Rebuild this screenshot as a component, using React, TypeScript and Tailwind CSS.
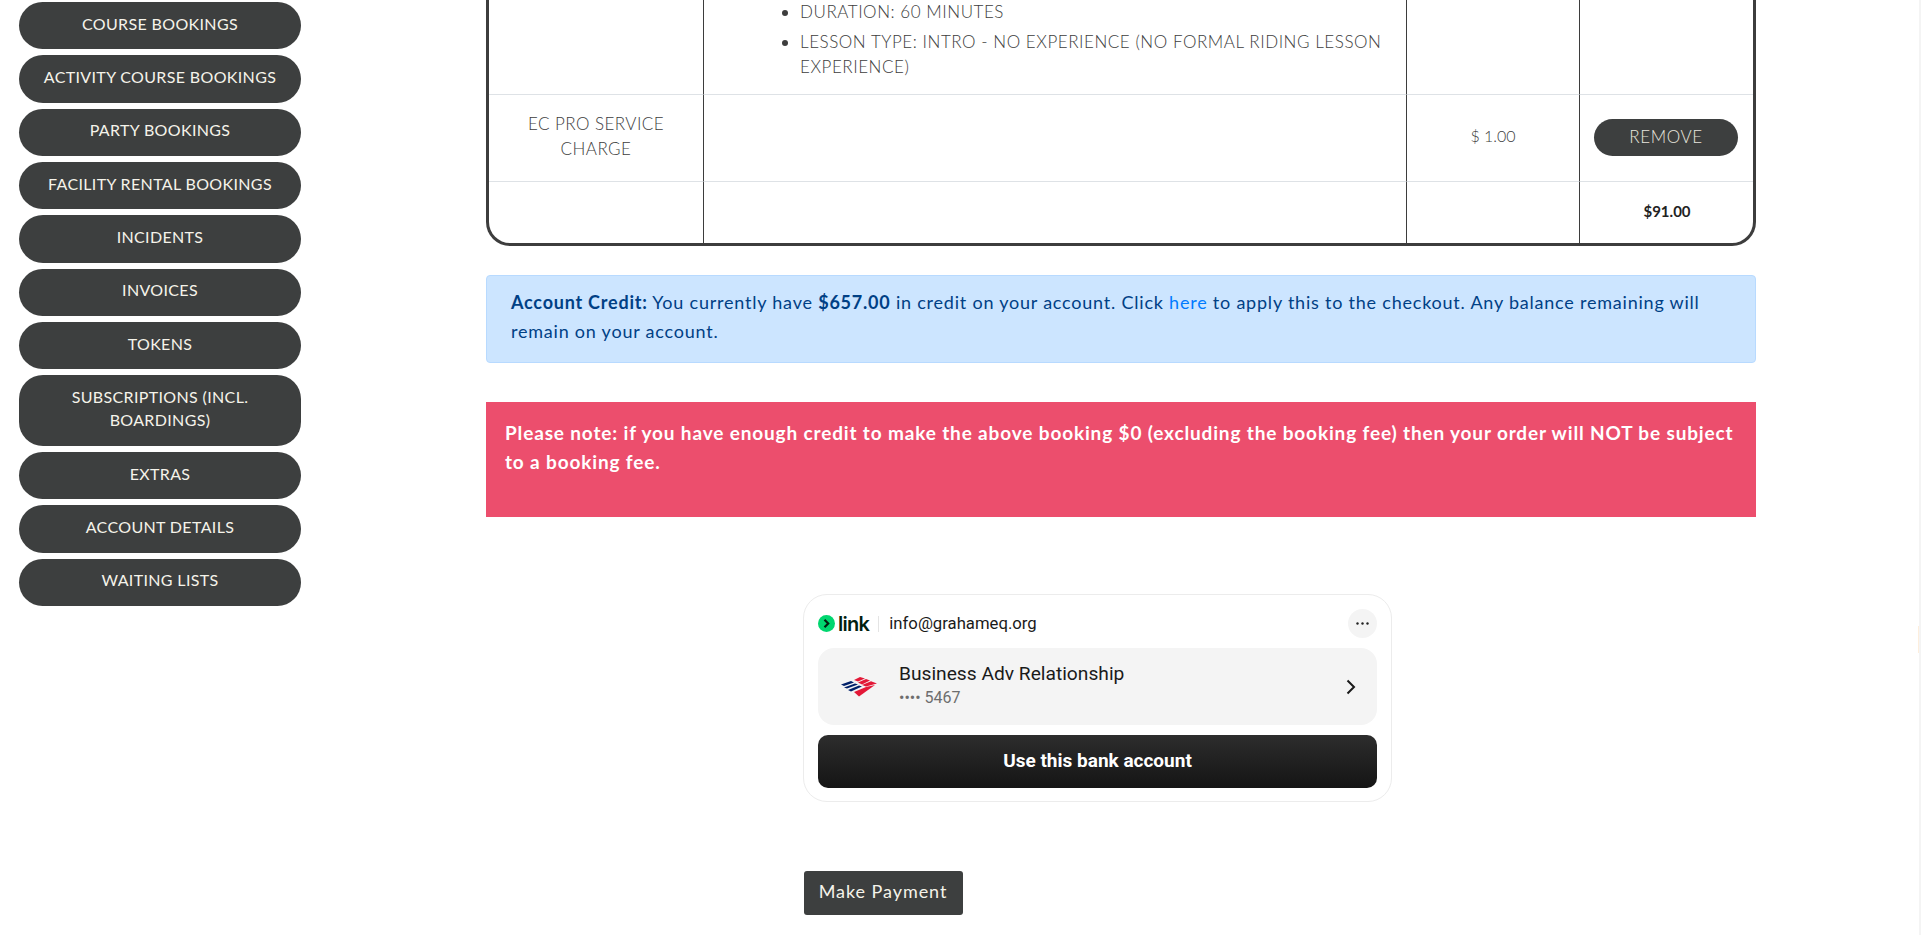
const navItems = [
  "COURSE BOOKINGS",
  "ACTIVITY COURSE BOOKINGS",
  "PARTY BOOKINGS",
  "FACILITY RENTAL BOOKINGS",
  "INCIDENTS",
  "INVOICES",
  "TOKENS",
  "SUBSCRIPTIONS (INCL. BOARDINGS)",
  "EXTRAS",
  "ACCOUNT DETAILS",
  "WAITING LISTS",
];

function Sidebar() {
  return (
    <nav className="ml-[19px] flex w-[282px] shrink-0 flex-col gap-[6px] pt-[2px]">
      {navItems.map((item) => (
        <a
          key={item}
          className="flex min-h-[47.35px] items-center justify-center rounded-[24px] bg-[#3d3f3f] px-[16px] pb-[14.5px] pt-[9.5px] text-center text-[16px] leading-[23.35px] tracking-[0.35px] text-[#f5f3ea]"
        >
          <span className={item.startsWith("SUBSCRIPTIONS") ? "max-w-[190px]" : ""}>{item}</span>
        </a>
      ))}
    </nav>
  );
}

function OrderTable() {
  return (
    <div className="grid grid-cols-[215px_703px_173px_174px] grid-rows-[94px_87px_62px] overflow-hidden rounded-b-[24px] border-x-[3px] border-b-[3px] border-[#3d3d3d] text-[17px] font-light text-[#3d3d3d]">
      <div className="border-r border-[#3d3d3d]" />
      <div className="border-r border-[#3d3d3d] pl-[96px] pr-[20px] tracking-[0.55px]">
        <ul className="list-disc leading-[24.5px]">
          <li className="h-[30px]">DURATION: 60 MINUTES</li>
          <li>LESSON TYPE: INTRO - NO EXPERIENCE (NO FORMAL RIDING LESSON EXPERIENCE)</li>
        </ul>
      </div>
      <div className="border-r border-[#3d3d3d]" />
      <div />

      <div className="flex items-center justify-center border-r border-t border-[#3d3d3d] border-t-[#dee2e6] px-[30px] pb-[3px] text-center leading-[24.5px] tracking-[0.45px]">
        EC PRO SERVICE CHARGE
      </div>
      <div className="border-r border-t border-[#3d3d3d] border-t-[#dee2e6]" />
      <div className="flex items-center justify-center border-r border-t border-[#3d3d3d] border-t-[#dee2e6] pb-[5px] text-[16px]">$ 1.00</div>
      <div className="flex items-center justify-center border-t border-[#dee2e6] pb-[2px] pr-[2px]">
        <button className="h-[37px] w-[144px] rounded-[19px] bg-[#3d3f3f] text-[17px] font-light tracking-[0.6px] text-[#e8e6de]">
          REMOVE
        </button>
      </div>

      <div className="border-r border-t border-[#3d3d3d] border-t-[#dee2e6]" />
      <div className="border-r border-t border-[#3d3d3d] border-t-[#dee2e6]" />
      <div className="border-r border-t border-[#3d3d3d] border-t-[#dee2e6]" />
      <div className="flex items-center justify-center border-t border-[#dee2e6] pb-[3px] text-[15px] font-bold text-[#222]">
        $91.00
      </div>
    </div>
  );
}

function LinkLogo() {
  return (
    <div className="flex items-center gap-[3px] font-[Inter,sans-serif]">
      <svg width="17" height="17" viewBox="0 0 17 17">
        <circle cx="8.5" cy="8.5" r="8.5" fill="#00d66f" />
        <path d="M6.5 4.8 L10.2 8.5 L6.5 12.2" fill="none" stroke="#011e0f" strokeWidth="2.2" />
      </svg>
      <span className="text-[20px] leading-none font-semibold tracking-[-0.7px] text-[#011e0f]">link</span>
    </div>
  );
}

function BankLogo() {
  return (
    <svg width="36" height="20" viewBox="0 0 36 20">
      <path d="M0 7.5 L10 4 L13 5.5 L3 9 Z" fill="#012169" />
      <path d="M3 10.5 L14 6.5 L17 7.5 L6 11.5 Z" fill="#012169" />
      <path d="M7 13 L18 8.5 L21 9.5 L10 14.5 Z" fill="#012169" />
      <path d="M13 3 L19 0 L24 1.5 L17 4.5 Z" fill="#e31837" />
      <path d="M17 5.5 L25 2 L29 3.5 L21 7.5 Z" fill="#e31837" />
      <path d="M21 8 L30 4.2 L36 6.5 L25 9.5 Z" fill="#e31837" />
      <path d="M13 15 L25 10 L34 8 L18 19.5 Z" fill="#e31837" />
    </svg>
  );
}

function LinkCard() {
  return (
    <div className="ml-[317px] mt-[77px] flex h-[208px] w-[589px] flex-col rounded-[24px] border border-[#ececec] px-[14px] pt-[14px] font-[Roboto,sans-serif]">
      <div className="flex h-[29px] items-center">
        <LinkLogo />
        <div className="ml-[9px] h-[16px] w-px bg-[#e4e4e4]" />
        <span className="ml-[10px] text-[16.7px] text-[#1a1a1a]">info@grahameq.org</span>
        <div className="ml-auto flex h-[29px] w-[29px] items-center justify-center rounded-full bg-[#f4f4f4]">
          <svg width="13" height="3" viewBox="0 0 13 3" fill="#222">
            <circle cx="1.5" cy="1.5" r="1.2" />
            <circle cx="6.5" cy="1.5" r="1.2" />
            <circle cx="11.5" cy="1.5" r="1.2" />
          </svg>
        </div>
      </div>
      <div className="mt-[10px] flex h-[77px] items-center rounded-[16px] bg-[#f4f4f4] pl-[23px] pr-[21px]">
        <BankLogo />
        <div className="ml-[22px] pb-[2px]">
          <div className="text-[19.2px] leading-[24px] text-[#1a1a1a]">Business Adv Relationship</div>
          <div className="mt-[1px] text-[16px] leading-[22px] text-[#6d6d6d]">•••• 5467</div>
        </div>
        <svg className="ml-auto" width="10" height="16" viewBox="0 0 10 16" fill="none" stroke="#1a1a1a" strokeWidth="2">
          <path d="M1.5 1.5 L8 8 L1.5 14.5" />
        </svg>
      </div>
      <button className="mt-[10px] h-[53px] rounded-[10px] bg-gradient-to-b from-[#2d2d2d] to-[#151515] text-[19px] font-bold text-white">
        Use this bank account
      </button>
    </div>
  );
}

export default function App() {
  return (
    <div className="relative flex h-[935px] overflow-hidden bg-white font-[Lato,sans-serif]">
      <Sidebar />
      <main className="ml-[185px] w-[1270px] shrink-0">
        <OrderTable />
        <div className="mt-[29px] h-[88px] rounded-[4px] border border-[#b8daff] bg-[#cce5ff] px-[24px] pt-[12px] text-[18px] leading-[29px] tracking-[0.78px] text-[#004085]">
          <strong>Account Credit:</strong> You currently have <strong>$657.00</strong> in credit on your account. Click{" "}
          <a className="text-[#007bff]">here</a> to apply this to the checkout. Any balance remaining will remain on your account.
        </div>
        <div className="mt-[39px] h-[115px] bg-[#ec4e6d] px-[19px] pt-[16px] text-[19px] leading-[29px] font-bold tracking-[0.85px] text-white">
          Please note: if you have enough credit to make the above booking $0 (excluding the booking fee) then your order will NOT be subject to a booking fee.
        </div>
        <LinkCard />
        <button className="ml-[317.5px] mt-[69px] h-[44px] w-[159px] rounded-[3px] bg-[#3d3f3f] pb-[4px] text-[18px] tracking-[0.95px] text-[#f5f3ea]">
          Make Payment
        </button>
      </main>
      <div className="absolute right-0 top-0 h-full w-[2px] bg-[#f4f4f4]" />
      <div className="absolute right-[2px] top-[626px] h-[27px] w-px bg-[#fdeedd]" />
    </div>
  );
}
